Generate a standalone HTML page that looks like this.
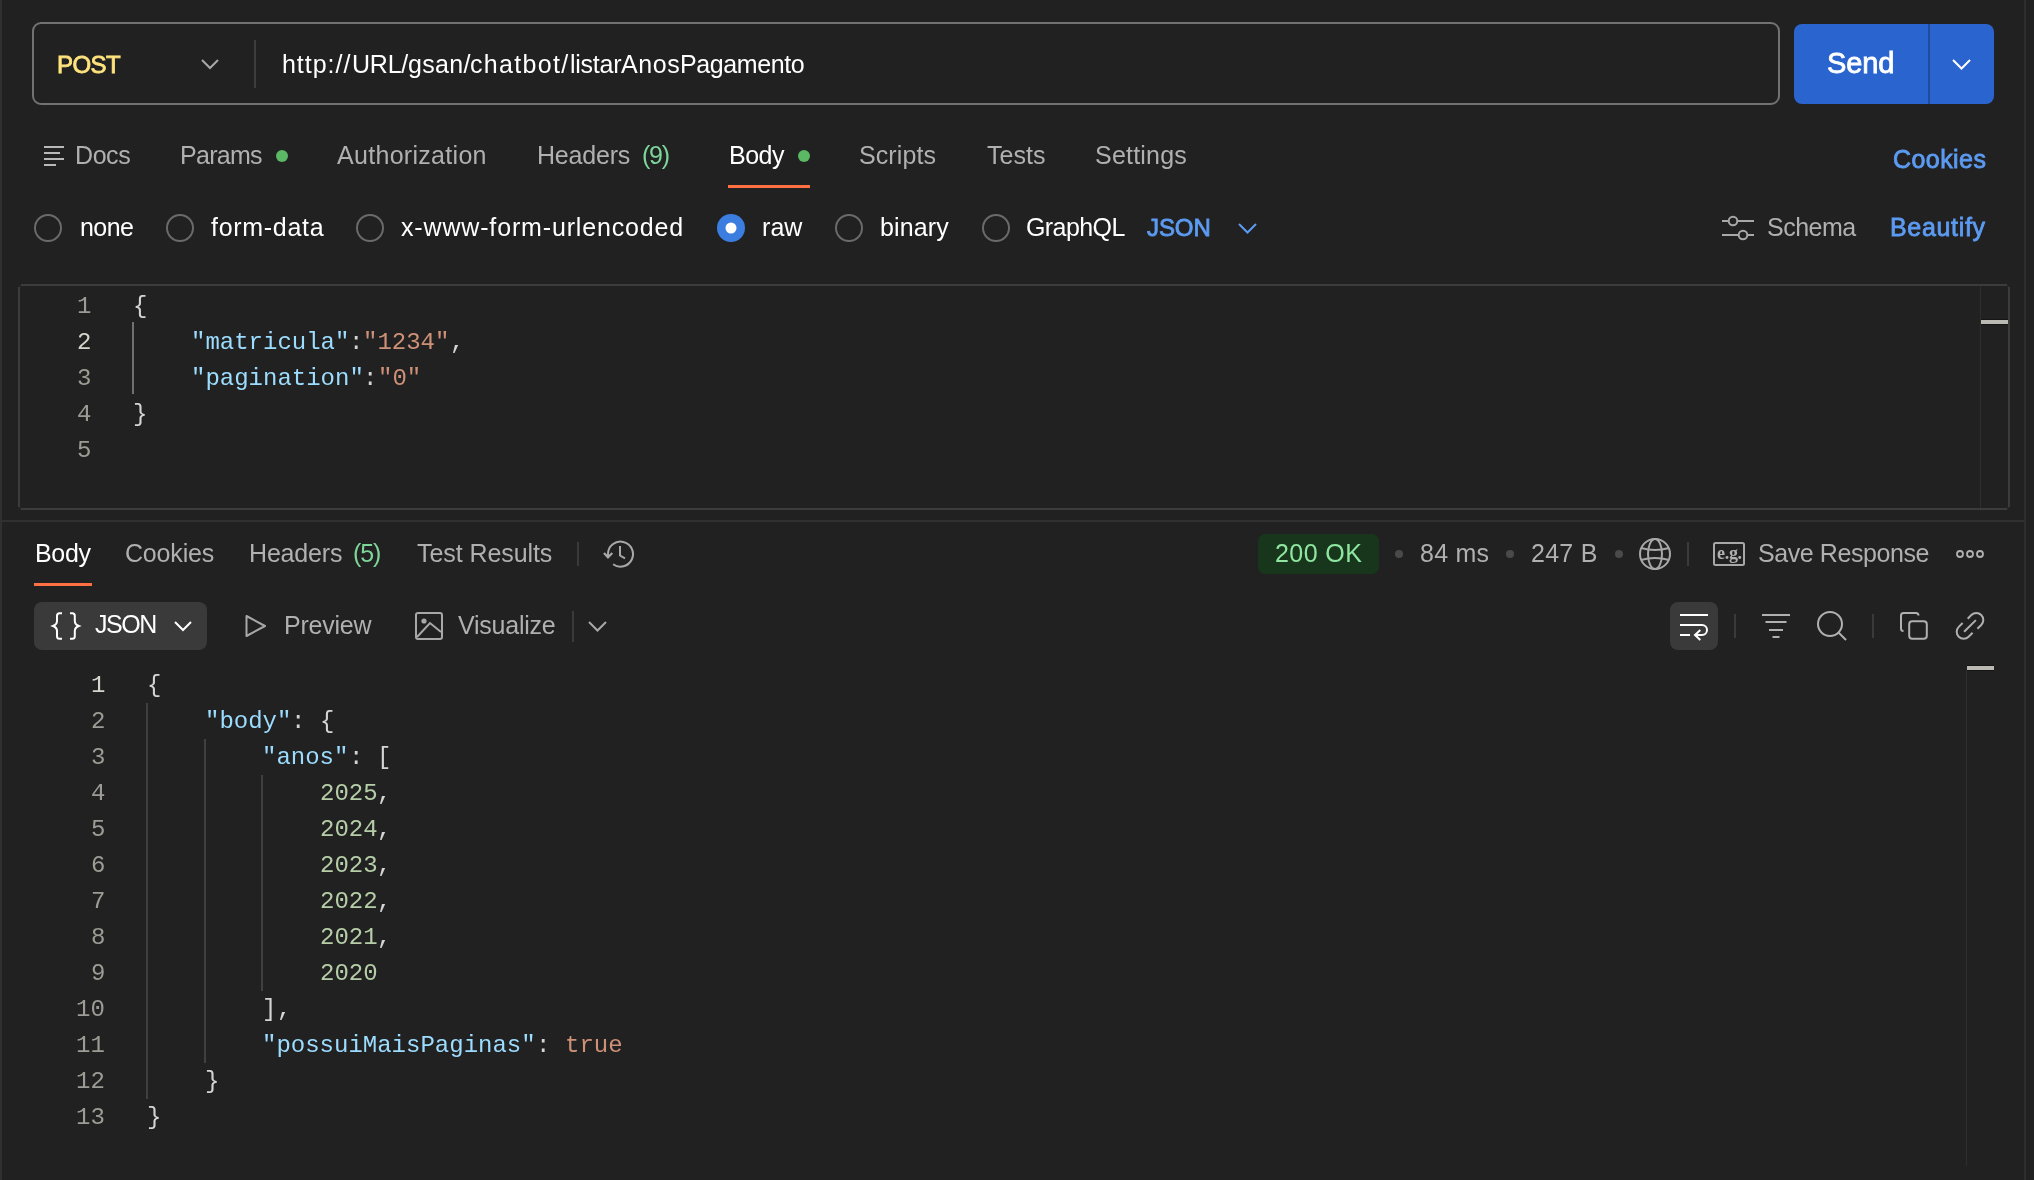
<!DOCTYPE html>
<html><head><meta charset="utf-8"><style>
html,body{margin:0;padding:0;}
body{width:2034px;height:1180px;overflow:hidden;background:#212121;position:relative;font-family:"Liberation Sans", sans-serif;}
svg{position:absolute;left:0;top:0;}
.t{position:absolute;white-space:nowrap;will-change:transform;}
.c{position:absolute;white-space:pre;will-change:transform;font-family:"Liberation Mono", monospace;font-size:24px;line-height:36px;}
</style></head><body>
<svg width="2034" height="1180" viewBox="0 0 2034 1180">
<rect x="0" y="0" width="2" height="1180" fill="#303030"/>
<rect x="2024" y="0" width="2" height="1180" fill="#2e2e2e"/>
<rect x="33" y="23" width="1746" height="81" rx="8" fill="none" stroke="#727272" stroke-width="2"/>
<polyline points="202,60 210,68 218,60" fill="none" stroke="#a8a8a8" stroke-width="2"/>
<rect x="254" y="40" width="2" height="48" fill="#3d3d3d"/>
<rect x="1794" y="24" width="200" height="80" rx="8" fill="#2a64cf"/>
<rect x="1928" y="24" width="2" height="80" fill="#1f4c9f"/>
<polyline points="1953,60 1961.5,68.5 1970,60" fill="none" stroke="#ffffff" stroke-width="2"/>
<rect x="44" y="146" width="20" height="2" fill="#b8b8b8"/>
<rect x="44" y="152" width="16" height="2" fill="#b8b8b8"/>
<rect x="44" y="158" width="20" height="2" fill="#b8b8b8"/>
<rect x="44" y="164" width="12" height="2" fill="#b8b8b8"/>
<circle cx="282" cy="156" r="6" fill="#5bb865"/>
<circle cx="804" cy="156" r="6" fill="#5bb865"/>
<rect x="728" y="185" width="82" height="3" fill="#ff7043"/>
<circle cx="48" cy="228" r="13" fill="none" stroke="#6a6a6a" stroke-width="2"/>
<circle cx="180" cy="228" r="13" fill="none" stroke="#6a6a6a" stroke-width="2"/>
<circle cx="370" cy="228" r="13" fill="none" stroke="#6a6a6a" stroke-width="2"/>
<circle cx="849" cy="228" r="13" fill="none" stroke="#6a6a6a" stroke-width="2"/>
<circle cx="996" cy="228" r="13" fill="none" stroke="#6a6a6a" stroke-width="2"/>
<circle cx="731" cy="228" r="14" fill="#3b7ee0"/>
<circle cx="731" cy="228" r="5.5" fill="#ffffff"/>
<polyline points="1239,224 1247.5,232.5 1256,224" fill="none" stroke="#5c9bf2" stroke-width="2"/>
<rect x="1722" y="220" width="32" height="2" fill="#a8a8a8"/>
<rect x="1722" y="234" width="32" height="2" fill="#a8a8a8"/>
<circle cx="1733" cy="221" r="4.3" fill="#212121" stroke="#a8a8a8" stroke-width="2"/>
<circle cx="1743" cy="235" r="4.3" fill="#212121" stroke="#a8a8a8" stroke-width="2"/>
<rect x="21" y="284" width="1986" height="2" fill="#3c3c3c"/>
<rect x="21" y="508" width="1986" height="2" fill="#3c3c3c"/>
<rect x="18" y="287" width="2" height="220" fill="#3c3c3c"/>
<rect x="2008" y="287" width="2" height="220" fill="#3c3c3c"/>
<g fill="#3c3c3c" opacity="0.5"><path d="M19,287 Q19.5,285.5 21,285 L21,286 L20,287 Z"/><path d="M2009,287 Q2008.5,285.5 2007,285 L2007,286 L2008,287 Z"/><path d="M19,507 Q19.5,508.5 21,509 L21,508 L20,507 Z"/><path d="M2009,507 Q2008.5,508.5 2007,509 L2007,508 L2008,507 Z"/></g>
<rect x="1980" y="286" width="1" height="222" fill="#2e2e2e"/>
<rect x="1981" y="319" width="27" height="1" fill="#151515"/>
<rect x="1981" y="320" width="27" height="4" fill="#babab2"/>
<rect x="1981" y="324" width="27" height="1" fill="#151515"/>
<rect x="132" y="322" width="2" height="72" fill="#707070"/>
<rect x="2" y="520" width="2022" height="2" fill="#303030"/>
<rect x="34" y="583" width="58" height="3" fill="#ff7043"/>
<rect x="577" y="542" width="2" height="24" fill="#3a3a3a"/>
<path d="M608,556.5 L608,554 A12.5,12.5 0 1 1 613.1,564.2" fill="none" stroke="#a8a8a8" stroke-width="2"/>
<polyline points="604,553 608,557.3 612.3,553" fill="none" stroke="#a8a8a8" stroke-width="2.2"/>
<polyline points="620,546 620,555.5 625,558.3" fill="none" stroke="#a8a8a8" stroke-width="2"/>
<rect x="1258" y="534" width="121" height="40" rx="7" fill="#18361b"/>
<circle cx="1399" cy="554" r="4" fill="#4a4a4a"/>
<circle cx="1510" cy="554" r="4" fill="#4a4a4a"/>
<circle cx="1619" cy="554" r="4" fill="#4a4a4a"/>
<g fill="none" stroke="#a8a8a8" stroke-width="2"><circle cx="1655" cy="554" r="15"/><ellipse cx="1655" cy="554" rx="7" ry="15"/><path d="M1641,548 Q1655,552 1669,548 M1641,560 Q1655,556 1669,560"/></g>
<rect x="1687" y="542" width="2" height="24" fill="#3a3a3a"/>
<rect x="1714" y="543" width="30" height="22" rx="1.5" fill="none" stroke="#a8a8a8" stroke-width="2"/>
<circle cx="1960" cy="554" r="3" fill="none" stroke="#b0b0b0" stroke-width="1.8"/>
<circle cx="1970" cy="554" r="3" fill="none" stroke="#b0b0b0" stroke-width="1.8"/>
<circle cx="1980" cy="554" r="3" fill="none" stroke="#b0b0b0" stroke-width="1.8"/>
<rect x="34" y="602" width="173" height="48" rx="8" fill="#3a3a3a"/>
<g fill="none" stroke="#ffffff" stroke-width="2"><path d="M62,613.2 H59.5 A2.5,2.5 0 0 0 57,615.7 V621 Q57,624.5 53,626 Q57,627.5 57,631 V636.3 A2.5,2.5 0 0 0 59.5,638.8 H62"/><path d="M70,613.2 H72.3 A2.5,2.5 0 0 1 74.8,615.7 V621 Q74.8,624.5 78.8,626 Q74.8,627.5 74.8,631 V636.3 A2.5,2.5 0 0 1 72.3,638.8 H70"/></g>
<polyline points="175,622 183,630 191,622" fill="none" stroke="#ffffff" stroke-width="2"/>
<path d="M246.5,616 L265,626 L246.5,636 Z" fill="none" stroke="#a8a8a8" stroke-width="2" stroke-linejoin="round"/>
<g fill="none" stroke="#a8a8a8" stroke-width="2"><rect x="416" y="613" width="26" height="26" rx="2"/><path d="M417,637 L430,623 L441,632"/></g><circle cx="424" cy="621" r="2.6" fill="#a8a8a8"/>
<rect x="572" y="611" width="2" height="31" fill="#3a3a3a"/>
<polyline points="589,622 597.5,630.5 606,622" fill="none" stroke="#a8a8a8" stroke-width="2"/>
<rect x="1670" y="602" width="48" height="48" rx="8" fill="#3a3a3a"/>
<g fill="none" stroke="#ffffff" stroke-width="2"><path d="M1680,615 H1708"/><path d="M1680,625 H1702 A5,5 0 0 1 1702,635 H1695"/><path d="M1680,635 H1690"/><polyline points="1700.3,630 1695,635 1700.3,640"/></g>
<rect x="1734" y="614" width="2" height="24" fill="#3a3a3a"/>
<g fill="#b0b0b0"><rect x="1762" y="614" width="28" height="2"/><rect x="1765.5" y="621" width="21" height="2"/><rect x="1769" y="629" width="14" height="2"/><rect x="1772.5" y="636" width="7" height="2"/></g>
<g fill="none" stroke="#b0b0b0" stroke-width="2"><circle cx="1830" cy="624" r="12"/><path d="M1838.5,632.5 L1846,640"/></g>
<rect x="1872" y="614" width="2" height="24" fill="#3a3a3a"/>
<g fill="none" stroke="#b0b0b0" stroke-width="2"><path d="M1903.5,631 A2.5,2.5 0 0 1 1901,628.5 V615.5 A2.5,2.5 0 0 1 1903.5,613 H1916 A2.5,2.5 0 0 1 1918.5,615.5"/><rect x="1909.2" y="621.2" width="17.6" height="17.6" rx="3"/></g>
<g fill="none" stroke="#b0b0b0" stroke-width="2"><path d="M1967.7,618.7 L1971.35,615.05 A7,7 0 0 1 1981.25,624.95 L1977.4,628.8"/><path d="M1962.6,623 L1958.75,626.85 A7,7 0 0 0 1968.65,636.75 L1972.6,632.7"/><path d="M1964.1,631.7 L1975.9,620.1"/></g>
<rect x="1966" y="670" width="1" height="496" fill="#2e2e2e"/>
<rect x="1967" y="665" width="27" height="1" fill="#151515"/>
<rect x="1967" y="666" width="27" height="4" fill="#babab2"/>
<rect x="1967" y="670" width="27" height="1" fill="#151515"/>
<rect x="146" y="703" width="2" height="396" fill="#404040"/>
<rect x="204" y="739" width="2" height="324" fill="#404040"/>
<rect x="261" y="775" width="2" height="216" fill="#404040"/>
</svg>
<div class="t" style="left:57.00px;top:49.50px;font-size:24px;line-height:30px;color:#ffe47e;-webkit-text-stroke:0.8px #ffe47e;letter-spacing:-0.550px;">POST</div>
<div class="t" style="left:282.40px;top:48.00px;font-size:25px;line-height:32px;color:#ffffff;letter-spacing:0.966px;">http://</div>
<div class="t" style="left:351.70px;top:48.00px;font-size:25px;line-height:32px;color:#ffffff;letter-spacing:-0.239px;">URL/</div>
<div class="t" style="left:407.70px;top:48.00px;font-size:25px;line-height:32px;color:#ffffff;letter-spacing:0.308px;">gsan/</div>
<div class="t" style="left:470.40px;top:48.00px;font-size:25px;line-height:32px;color:#ffffff;letter-spacing:1.331px;">chatbot/</div>
<div class="t" style="left:570.00px;top:48.00px;font-size:25px;line-height:32px;color:#ffffff;letter-spacing:-0.264px;">listar</div>
<div class="t" style="left:621.20px;top:48.00px;font-size:25px;line-height:32px;color:#ffffff;letter-spacing:0.554px;">Anos</div>
<div class="t" style="left:680.40px;top:48.00px;font-size:25px;line-height:32px;color:#ffffff;letter-spacing:-0.406px;">Pagamento</div>
<div class="t" style="left:1827.00px;top:44.70px;font-size:29px;line-height:37px;color:#ffffff;-webkit-text-stroke:0.8px #ffffff;letter-spacing:-0.150px;">Send</div>
<div class="t" style="left:75.00px;top:139.20px;font-size:25px;line-height:32px;color:#b0b0b0;letter-spacing:-0.417px;">Docs</div>
<div class="t" style="left:180.40px;top:139.20px;font-size:25px;line-height:32px;color:#b0b0b0;letter-spacing:-0.710px;">Params</div>
<div class="t" style="left:337.30px;top:139.20px;font-size:25px;line-height:32px;color:#b0b0b0;letter-spacing:0.300px;">Authorization</div>
<div class="t" style="left:537.00px;top:139.20px;font-size:25px;line-height:32px;color:#b0b0b0;letter-spacing:-0.200px;">Headers</div>
<div class="t" style="left:641.50px;top:139.20px;font-size:25px;line-height:32px;color:#7cd69a;letter-spacing:-1.225px;">(9)</div>
<div class="t" style="left:729.00px;top:139.20px;font-size:25px;line-height:32px;color:#ffffff;letter-spacing:-0.500px;">Body</div>
<div class="t" style="left:859.20px;top:139.20px;font-size:25px;line-height:32px;color:#b0b0b0;letter-spacing:0.100px;">Scripts</div>
<div class="t" style="left:986.50px;top:139.20px;font-size:25px;line-height:32px;color:#b0b0b0;letter-spacing:0.037px;">Tests</div>
<div class="t" style="left:1095.20px;top:139.20px;font-size:25px;line-height:32px;color:#b0b0b0;letter-spacing:0.207px;">Settings</div>
<div class="t" style="left:1892.50px;top:143.00px;font-size:25px;line-height:32px;color:#5c9bf2;-webkit-text-stroke:0.8px #5c9bf2;letter-spacing:0.433px;">Cookies</div>
<div class="t" style="left:79.50px;top:211.00px;font-size:25px;line-height:32px;color:#ffffff;letter-spacing:-0.533px;">none</div>
<div class="t" style="left:210.80px;top:211.00px;font-size:25px;line-height:32px;color:#ffffff;letter-spacing:0.706px;">form-data</div>
<div class="t" style="left:401.20px;top:211.00px;font-size:25px;line-height:32px;color:#ffffff;letter-spacing:0.842px;">x-www-form-urlencoded</div>
<div class="t" style="left:761.50px;top:211.00px;font-size:25px;line-height:32px;color:#ffffff;letter-spacing:0.050px;">raw</div>
<div class="t" style="left:880.00px;top:211.00px;font-size:25px;line-height:32px;color:#ffffff;letter-spacing:0.120px;">binary</div>
<div class="t" style="left:1026.00px;top:211.00px;font-size:25px;line-height:32px;color:#ffffff;letter-spacing:-0.592px;">GraphQL</div>
<div class="t" style="left:1147.00px;top:212.50px;font-size:24px;line-height:30px;color:#5c9bf2;-webkit-text-stroke:0.8px #5c9bf2;letter-spacing:-0.100px;">JSON</div>
<div class="t" style="left:1767.00px;top:211.00px;font-size:25px;line-height:32px;color:#b0b0b0;letter-spacing:-0.490px;">Schema</div>
<div class="t" style="left:1890.30px;top:211.00px;font-size:25px;line-height:32px;color:#5c9bf2;-webkit-text-stroke:0.8px #5c9bf2;letter-spacing:0.679px;">Beautify</div>
<div class="t" style="left:34.90px;top:537.20px;font-size:25px;line-height:32px;color:#ffffff;letter-spacing:-0.300px;">Body</div>
<div class="t" style="left:125.30px;top:537.20px;font-size:25px;line-height:32px;color:#b0b0b0;letter-spacing:-0.183px;">Cookies</div>
<div class="t" style="left:248.70px;top:537.20px;font-size:25px;line-height:32px;color:#b0b0b0;letter-spacing:-0.167px;">Headers</div>
<div class="t" style="left:353.20px;top:537.20px;font-size:25px;line-height:32px;color:#7cd69a;letter-spacing:-1.175px;">(5)</div>
<div class="t" style="left:416.50px;top:537.20px;font-size:25px;line-height:32px;color:#b0b0b0;letter-spacing:-0.077px;">Test Results</div>
<div class="t" style="left:1274.80px;top:537.00px;font-size:25px;line-height:32px;color:#8ee6a0;letter-spacing:0.420px;">200 OK</div>
<div class="t" style="left:1420.00px;top:537.00px;font-size:25px;line-height:32px;color:#b0b0b0;letter-spacing:0.225px;">84 ms</div>
<div class="t" style="left:1531.40px;top:537.00px;font-size:25px;line-height:32px;color:#b0b0b0;letter-spacing:0.262px;">247 B</div>
<div class="t" style="left:1717px;top:541px;font-family:'Liberation Serif',serif;font-weight:700;font-size:18px;line-height:24px;color:#b0b0b0;letter-spacing:-0.3px">e.g.</div>
<div class="t" style="left:1757.80px;top:537.00px;font-size:25px;line-height:32px;color:#b0b0b0;letter-spacing:-0.425px;">Save Response</div>
<div class="t" style="left:95.00px;top:608.00px;font-size:25px;line-height:32px;color:#ffffff;letter-spacing:-1.467px;">JSON</div>
<div class="t" style="left:284.20px;top:608.90px;font-size:25px;line-height:32px;color:#b0b0b0;letter-spacing:-0.233px;">Preview</div>
<div class="t" style="left:457.60px;top:608.90px;font-size:25px;line-height:32px;color:#b0b0b0;letter-spacing:-0.238px;">Visualize</div>
<div class="c" style="left:133.00px;top:289.10px;color:#d4d4d4">{</div>
<div class="c" style="left:190.60px;top:325.10px;color:#9cdcfe">"matricula"</div>
<div class="c" style="left:349.00px;top:325.10px;color:#d4d4d4">:</div>
<div class="c" style="left:363.40px;top:325.10px;color:#ce9178">"1234"</div>
<div class="c" style="left:449.80px;top:325.10px;color:#d4d4d4">,</div>
<div class="c" style="left:190.60px;top:361.10px;color:#9cdcfe">"pagination"</div>
<div class="c" style="left:363.40px;top:361.10px;color:#d4d4d4">:</div>
<div class="c" style="left:377.80px;top:361.10px;color:#ce9178">"0"</div>
<div class="c" style="left:133.00px;top:397.10px;color:#d4d4d4">}</div>
<div class="c" style="left:76.80px;top:289.10px;color:#9d9c94">1</div>
<div class="c" style="left:76.80px;top:325.10px;color:#d6d5cc">2</div>
<div class="c" style="left:76.80px;top:361.10px;color:#9d9c94">3</div>
<div class="c" style="left:76.80px;top:397.10px;color:#9d9c94">4</div>
<div class="c" style="left:76.80px;top:433.10px;color:#9d9c94">5</div>
<div class="c" style="left:147.00px;top:668.30px;color:#d4d4d4">{</div>
<div class="c" style="left:204.60px;top:704.30px;color:#9cdcfe">"body"</div>
<div class="c" style="left:291.00px;top:704.30px;color:#d4d4d4">: </div>
<div class="c" style="left:319.80px;top:704.30px;color:#d4d4d4">{</div>
<div class="c" style="left:262.20px;top:740.30px;color:#9cdcfe">"anos"</div>
<div class="c" style="left:348.60px;top:740.30px;color:#d4d4d4">: </div>
<div class="c" style="left:377.40px;top:740.30px;color:#d4d4d4">[</div>
<div class="c" style="left:319.80px;top:776.30px;color:#b5cea8">2025</div>
<div class="c" style="left:377.40px;top:776.30px;color:#d4d4d4">,</div>
<div class="c" style="left:319.80px;top:812.30px;color:#b5cea8">2024</div>
<div class="c" style="left:377.40px;top:812.30px;color:#d4d4d4">,</div>
<div class="c" style="left:319.80px;top:848.30px;color:#b5cea8">2023</div>
<div class="c" style="left:377.40px;top:848.30px;color:#d4d4d4">,</div>
<div class="c" style="left:319.80px;top:884.30px;color:#b5cea8">2022</div>
<div class="c" style="left:377.40px;top:884.30px;color:#d4d4d4">,</div>
<div class="c" style="left:319.80px;top:920.30px;color:#b5cea8">2021</div>
<div class="c" style="left:377.40px;top:920.30px;color:#d4d4d4">,</div>
<div class="c" style="left:319.80px;top:956.30px;color:#b5cea8">2020</div>
<div class="c" style="left:262.20px;top:992.30px;color:#d4d4d4">]</div>
<div class="c" style="left:276.60px;top:992.30px;color:#d4d4d4">,</div>
<div class="c" style="left:262.20px;top:1028.30px;color:#9cdcfe">"possuiMaisPaginas"</div>
<div class="c" style="left:535.80px;top:1028.30px;color:#d4d4d4">: </div>
<div class="c" style="left:564.60px;top:1028.30px;color:#ce9178">true</div>
<div class="c" style="left:204.60px;top:1064.30px;color:#d4d4d4">}</div>
<div class="c" style="left:147.00px;top:1100.30px;color:#d4d4d4">}</div>
<div class="c" style="left:90.60px;top:668.30px;color:#d6d5cc">1</div>
<div class="c" style="left:90.60px;top:704.30px;color:#9d9c94">2</div>
<div class="c" style="left:90.60px;top:740.30px;color:#9d9c94">3</div>
<div class="c" style="left:90.60px;top:776.30px;color:#9d9c94">4</div>
<div class="c" style="left:90.60px;top:812.30px;color:#9d9c94">5</div>
<div class="c" style="left:90.60px;top:848.30px;color:#9d9c94">6</div>
<div class="c" style="left:90.60px;top:884.30px;color:#9d9c94">7</div>
<div class="c" style="left:90.60px;top:920.30px;color:#9d9c94">8</div>
<div class="c" style="left:90.60px;top:956.30px;color:#9d9c94">9</div>
<div class="c" style="left:76.20px;top:992.30px;color:#9d9c94">10</div>
<div class="c" style="left:76.20px;top:1028.30px;color:#9d9c94">11</div>
<div class="c" style="left:76.20px;top:1064.30px;color:#9d9c94">12</div>
<div class="c" style="left:76.20px;top:1100.30px;color:#9d9c94">13</div>
</body></html>
